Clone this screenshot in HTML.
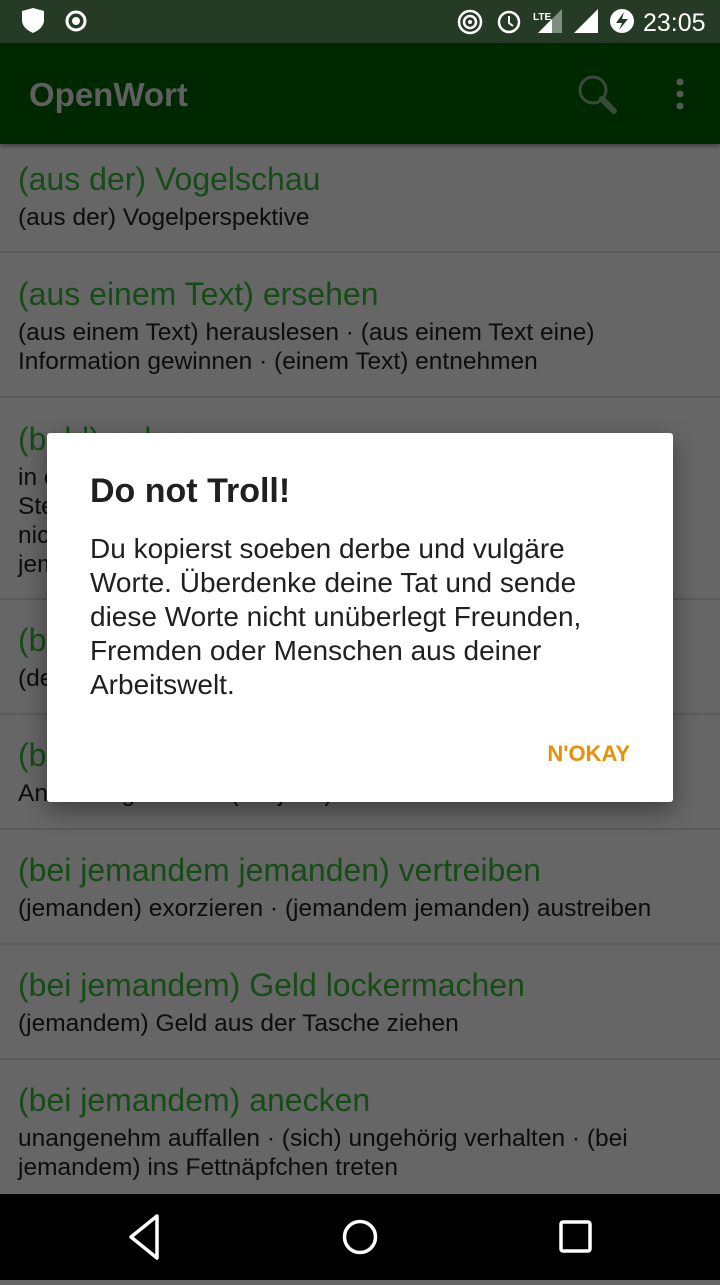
<!DOCTYPE html>
<html><head><meta charset="utf-8"><style>
*{margin:0;padding:0;box-sizing:border-box}
body{width:720px;height:1280px;overflow:hidden;background:#666;font-family:"Liberation Sans",sans-serif;position:relative}
.sb{position:absolute;top:0;left:0;width:720px;height:43px;background:#253b25}
.ab{position:absolute;top:43px;left:0;width:720px;height:101px;background:#002800;box-shadow:0 2px 4px rgba(0,0,0,.4)}
.t{position:absolute;left:18px;color:#164c16;font-size:32px;white-space:nowrap;line-height:34px}
.s{position:absolute;left:18px;color:#0d0d0d;font-size:24.5px;white-space:nowrap;line-height:29px}
.d{position:absolute;left:0;width:720px;height:2px;background:#5a5a5a}
.nav{position:absolute;top:1194px;left:0;width:720px;height:86px;background:#000}
.dlg{position:absolute;left:47px;top:433px;width:626px;height:369px;background:#fff;border-radius:3px;box-shadow:0 8px 24px rgba(0,0,0,.4)}
</style></head><body>
<div class="sb">
<svg width="720" height="43" style="position:absolute;left:0;top:0">
<path d="M22 11 L33 8 L44 11 L44 20 Q44 28 33 33 Q22 28 22 20Z" fill="#fff"/>
<circle cx="76" cy="21" r="9" fill="none" stroke="#fff" stroke-width="3"/><circle cx="76" cy="21" r="4" fill="#fff"/>
<circle cx="470" cy="22" r="11" fill="none" stroke="#fff" stroke-width="2.5"/><circle cx="470" cy="22" r="6" fill="none" stroke="#fff" stroke-width="2.5"/><circle cx="470" cy="22" r="2" fill="#fff"/>
<circle cx="509" cy="22" r="10" fill="none" stroke="#fff" stroke-width="2.5"/><path d="M509 16v7l4 3" stroke="#fff" stroke-width="2" fill="none"/>
<text x="533" y="20" fill="#fff" font-size="10" font-family="Liberation Sans" font-weight="bold">LTE</text>
<path d="M538 33 L562 33 L562 9Z" fill="#7f8f7f"/><path d="M538 33 L552 33 L552 19Z" fill="#fff"/>
<path d="M574 33 L598 33 L598 9Z" fill="#fff"/>
<circle cx="622" cy="21" r="12" fill="#fff"/><path d="M624 12 L616 23 L622 23 L619 30 L628 19 L622 19Z" fill="#253b25"/>
<text x="643" y="31" fill="#fff" font-size="25" font-family="Liberation Sans">23:05</text>
</svg></div>
<div class="ab">
<div style="position:absolute;left:29px;top:33px;color:#5f5f5f;font-size:33px;font-weight:bold">OpenWort</div>
<svg width="720" height="101" style="position:absolute;left:0;top:0">
<circle cx="593" cy="47" r="13" fill="none" stroke="#3a4a3a" stroke-width="3"/><path d="M602 56 L614 68" stroke="#3a4a3a" stroke-width="6" stroke-linecap="round"/>
<circle cx="680" cy="39" r="3.5" fill="#505a50"/><circle cx="680" cy="51" r="3.5" fill="#505a50"/><circle cx="680" cy="63" r="3.5" fill="#505a50"/>
</svg></div>

<div class="t" style="top:162px">(aus der) Vogelschau</div>
<div class="s" style="top:203px">(aus der) Vogelperspektive</div>
<div class="d" style="top:251px"></div>
<div class="t" style="top:277px">(aus einem Text) ersehen</div>
<div class="s" style="top:318px">(aus einem Text) herauslesen · (aus einem Text eine)</div>
<div class="s" style="top:347px">Information gewinnen · (einem Text) entnehmen</div>
<div class="d" style="top:396px"></div>
<div class="t" style="top:422px">(bald) geben</div>
<div class="s" style="top:463px">in einem Stück</div>
<div class="s" style="top:492px">Stelle</div>
<div class="s" style="top:521px">nicht</div>
<div class="s" style="top:550px">jemandem</div>
<div class="d" style="top:598px"></div>
<div class="t" style="top:623px">(bei)</div>
<div class="s" style="top:664px">(der)</div>
<div class="d" style="top:713px"></div>
<div class="t" style="top:738px">(bei)</div>
<div class="s" style="top:779px">Ansehen genießen (bei jem.)</div>
<div class="d" style="top:828px"></div>
<div class="t" style="top:853px">(bei jemandem jemanden) vertreiben</div>
<div class="s" style="top:894px">(jemanden) exorzieren · (jemandem jemanden) austreiben</div>
<div class="d" style="top:943px"></div>
<div class="t" style="top:968px">(bei jemandem) Geld lockermachen</div>
<div class="s" style="top:1009px">(jemandem) Geld aus der Tasche ziehen</div>
<div class="d" style="top:1058px"></div>
<div class="t" style="top:1083px">(bei jemandem) anecken</div>
<div class="s" style="top:1124px">unangenehm auffallen · (sich) ungehörig verhalten · (bei</div>
<div class="s" style="top:1153px">jemandem) ins Fettnäpfchen treten</div>

<div class="nav"><svg width="720" height="86">
<path d="M157 22 L131 43 L157 64Z" fill="none" stroke="#fff" stroke-width="3.5" stroke-linejoin="round"/>
<circle cx="360" cy="43" r="15.5" fill="none" stroke="#fff" stroke-width="3.5"/>
<rect x="561" y="28" width="29" height="29" rx="2" fill="none" stroke="#fff" stroke-width="3.5"/>
</svg></div>

<div class="dlg">
<div style="position:absolute;left:43px;top:39px;font-size:34px;font-weight:bold;color:#202020">Do not Troll!</div>
<div style="position:absolute;left:43px;top:99px;width:580px;font-size:28px;line-height:34px;color:#202020;white-space:nowrap">Du kopierst soeben derbe und vulgäre<br>Worte. Überdenke deine Tat und sende<br>diese Worte nicht unüberlegt Freunden,<br>Fremden oder Menschen aus deiner<br>Arbeitswelt.</div>
<div style="position:absolute;right:43px;top:308px;font-size:22px;font-weight:bold;color:#e8900a">N'OKAY</div>
</div>
</body></html>
